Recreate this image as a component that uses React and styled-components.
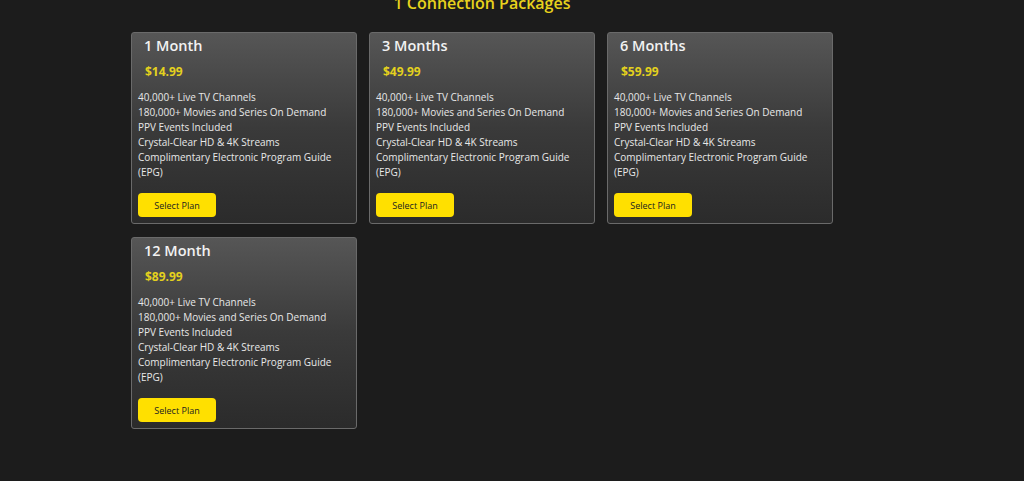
import styled, { createGlobalStyle } from "styled-components";

const Global = createGlobalStyle`
  body { margin: 0; background: #1c1c1c; font-family: "Open Sans", "Liberation Sans", sans-serif; }
`

const Page = styled.div`
  width: 702px;
  margin-left: 131px;
  height: 481px;
  overflow: hidden;
`

const Heading = styled.h2`
  margin: -7px 0 0;
  height: 39px;
  line-height: 20px;
  text-align: center;
  color: #e8d21c;
  font-size: 16px;
  font-weight: 600;
`

const Grid = styled.div`
  display: grid;
  grid-template-columns: repeat(3, 226px);
  gap: 13px 12px;
`

const Card = styled.div`
  height: 192px;
  box-sizing: border-box;
  border: 1px solid #6a6a6a;
  border-radius: 3px;
  background: linear-gradient(180deg, #565656 0%, #3a3a3a 50%, #2b2b2b 100%);
  padding: 4px 6px 0;
  display: flex;
  flex-direction: column;
`

const Name = styled.div`
  color: #f2f2f2;
  font-size: 14.5px;
  font-weight: 600;
  margin-left: 6px;
  line-height: 18px;
`

const Price = styled.div`
  color: #e3d11e;
  font-size: 12px;
  font-weight: 700;
  margin: 8px 0 0 7px;
`

const Features = styled.ul`
  list-style: none;
  margin: 10px 0 0;
  padding: 0;
  color: #e8e8e8;
  font-size: 10px;
  line-height: 15px;
`

const Button = styled.button`
  margin-top: 13px;
  width: 78px;
  height: 24px;
  border: none;
  border-radius: 4px;
  background: #ffe000;
  color: #222;
  font-family: inherit;
  font-size: 9px;
  font-weight: 500;
`

const FEATURES = [
  "40,000+ Live TV Channels",
  "180,000+ Movies and Series On Demand",
  "PPV Events Included",
  "Crystal-Clear HD & 4K Streams",
  "Complimentary Electronic Program Guide (EPG)",
]

const PLANS = [
  { name: "1 Month", price: "$14.99" },
  { name: "3 Months", price: "$49.99" },
  { name: "6 Months", price: "$59.99" },
  { name: "12 Month", price: "$89.99" },
]

const App = () => (
  <>
    <Global/>
    <Page>
      <Heading>1 Connection Packages</Heading>
      <Grid>
        { PLANS.map(p => <Card key={ p.name }>
          <Name>{ p.name }</Name>
          <Price>{ p.price }</Price>
          <Features>
            { FEATURES.map(f => <li key={ f }>{ f }</li>) }
          </Features>
          <Button>Select Plan</Button>
        </Card>) }
      </Grid>
    </Page>
  </>
)

export default App;
